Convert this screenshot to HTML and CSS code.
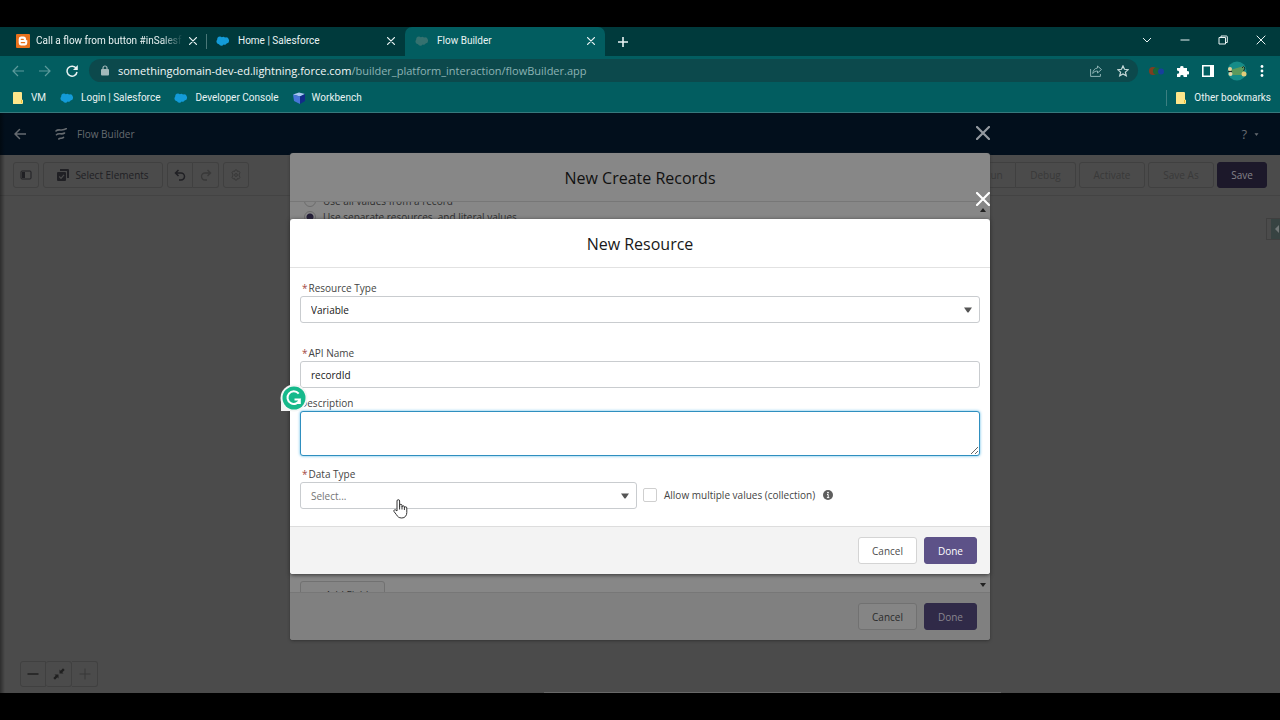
FILE: index.html
```html
<!DOCTYPE html>
<html lang="en">
<head>
<meta charset="utf-8">
<title>Flow Builder</title>
<link rel="stylesheet" href="styles.css">
</head>
<body>
<svg class="defs" aria-hidden="true">
  <symbol id="cloud" viewBox="0 0 14 10"><path d="M5.8 1.2A2.6 2.6 0 0 1 9 1.4a3.2 3.2 0 1 1 1.6 6.2 2.3 2.3 0 0 1-3 .9 2.6 2.6 0 0 1-4.6-.3A2.6 2.6 0 0 1 1.2 3.8 2.8 2.8 0 0 1 5.8 1.2z" fill="currentColor"/></symbol>
  <symbol id="close" viewBox="0 0 14 14"><path d="M1 1l12 12M13 1L1 13" stroke="currentColor" stroke-width="2.2" fill="none" stroke-linecap="round"/></symbol>
  <symbol id="folder" viewBox="0 0 12 12"><path d="M1 1a1 1 0 0 1 1-1h7a1 1 0 0 1 1 1v6.500l1 .5v3a1 1 0 0 1-1 1H1.500a.5.5 0 0 1-.5-.5z" fill="#fde68a"/><path d="M9.500 8v3" stroke="#e8bd3a"/></symbol>
  <symbol id="down" viewBox="0 0 10 6"><path d="M1 .5h8L5.700 5.200a1 1 0 0 1-1.400 0z" fill="currentColor"/></symbol>
</svg>
<div class="window">
  <header class="browser">
    <div class="tabs">
      <div class="tab tab-first">
        <svg class="i14" viewBox="0 0 14 14"><rect width="14" height="14" rx="1" fill="#e8711c"/><path d="M5 2.500h2.500A2.500 2.500 0 0 1 10 5c0 1 .3 1.200 1.300 1.300v2.700A2.500 2.500 0 0 1 9 11.500H5A2.500 2.500 0 0 1 2.700 9V5A2.500 2.500 0 0 1 5 2.500z" fill="#fff"/><path d="M5.300 5.300h2M5.300 8.700h3.300" stroke="#e8711c" stroke-width="1.300" stroke-linecap="round"/></svg>
        <span class="tab-title fade">Call a flow from button #inSalesf</span>
        <button class="plain" aria-label="Close tab"><svg class="i8"><use href="#close"/></svg></button>
      </div>
      <div class="tab tab-mid">
        <svg class="cloud"><use href="#cloud"/></svg>
        <span class="tab-title">Home | Salesforce</span>
        <button class="plain" aria-label="Close tab"><svg class="i8"><use href="#close"/></svg></button>
      </div>
      <div class="tab active">
        <svg class="cloud dim"><use href="#cloud"/></svg>
        <span class="tab-title">Flow Builder</span>
        <button class="plain" aria-label="Close tab"><svg class="i8"><use href="#close"/></svg></button>
      </div>
      <button class="plain newtab" aria-label="New tab"><svg class="i10" viewBox="0 0 10 10"><path d="M5 0v10M0 5h10" stroke="currentColor" stroke-width="1.600"/></svg></button>
      <div class="controls">
        <button class="plain" aria-label="Search tabs"><svg class="i10" viewBox="0 0 10 10"><path d="M1 3l4 4 4-4" stroke="currentColor" fill="none"/></svg></button>
        <button class="plain" aria-label="Minimize"><svg class="i10" viewBox="0 0 10 10"><path d="M.5 5h9" stroke="currentColor"/></svg></button>
        <button class="plain" aria-label="Restore"><svg class="i10" viewBox="0 0 10 10"><path d="M1 2.500h6.500V9H1zM3 2.500V1h5.500a.8.8 0 0 1 .8.8V7.500H7.500" stroke="currentColor" fill="none"/></svg></button>
        <button class="plain" aria-label="Close window"><svg class="i10" viewBox="0 0 10 10"><path d="M.7.7l8.600 8.600M9.300.7L.7 9.300" stroke="currentColor"/></svg></button>
      </div>
    </div>
    <div class="navbar">
      <button class="plain off" aria-label="Back"><svg class="i12" viewBox="0 0 12 12"><path d="M12 6H1.500M6 1L1 6l5 5" stroke="currentColor" fill="none" stroke-width="1.200"/></svg></button>
      <button class="plain off" aria-label="Forward"><svg class="i12" viewBox="0 0 12 12"><path d="M0 6h10.500M6 1l5 5-5 5" stroke="currentColor" fill="none" stroke-width="1.200"/></svg></button>
      <button class="plain" aria-label="Reload"><svg class="i12" viewBox="0 0 12 12"><path d="M10.300 3.500A5 5 0 1 0 11 7" stroke="currentColor" fill="none" stroke-width="1.500"/><path d="M11.800 0v5H7z" fill="currentColor"/></svg></button>
      <div class="url">
        <svg class="lock" viewBox="0 0 8 11"><rect y="4" width="8" height="6.500" rx="1" fill="currentColor"/><path d="M2 4.500V3a2 2 0 0 1 4 0v1.500" stroke="currentColor" fill="none" stroke-width="1.200"/></svg>
        <span class="address"><span class="host">somethingdomain-dev-ed.lightning.force.com</span>/builder_platform_interaction/flowBuilder.app</span>
        <svg class="i12" viewBox="0 0 12 12"><path d="M.6 4v7.400h9.800V9M7.500 1l4 3.500-4 3.500V6C5.500 6 4 6.700 2.800 8.500 3 5.500 4.500 3.300 7.500 3z" stroke="currentColor" fill="none"/></svg>
        <svg class="i12 star" viewBox="0 0 12 12"><path d="M6 .9l1.500 3.400 3.700.4-2.800 2.400.9 3.700L6 8.900l-3.300 1.900.9-3.700L.8 4.700l3.700-.4z" stroke="currentColor" fill="none" stroke-width="1.200"/></svg>
      </div>
      <div class="extensions">
        <svg class="wide" viewBox="0 0 15 10"><circle cx="4" cy="5" r="4" fill="#7d3d20"/><circle cx="7.500" cy="5" r="3.600" fill="#17653a"/><circle cx="12" cy="5.500" r="3" fill="#173f9c"/></svg>
        <svg class="i12" viewBox="0 0 12 12"><path d="M0 3h3.200a1.700 1.700 0 1 1 3.300 0H10v3.200a1.700 1.700 0 1 1 0 3.300V12H6.500a1.600 1.600 0 1 0-3.100 0H0V8.700a1.600 1.600 0 1 0 0-3z" fill="#fff"/></svg>
        <svg class="i12" viewBox="0 0 12 12"><path d="M.8.8h10.400v10.400H.8z" stroke="#fff" stroke-width="1.600" fill="none"/><path d="M8 1h3v10H8z" fill="#fff"/></svg>
        <svg class="avatar" viewBox="0 0 20 20"><circle cx="10" cy="10" r="9.500" fill="#168c88"/><path d="M3 9l14-4v9H6z" fill="#5d9a5c"/><circle cx="3" cy="8" r="2" fill="#e5ce99"/><circle cx="3.500" cy="13" r="2" fill="#e5d5a5"/><circle cx="17" cy="13" r="2.500" fill="#e2cc7a"/><path d="M1 10.500h4M15 7l1.500-1.500L18 7l-1.500 3" stroke="#1d2b2b" fill="none"/></svg>
        <svg class="dots" viewBox="0 0 4 12"><circle cx="2" cy="1.500" r="1.400" fill="#fff"/><circle cx="2" cy="6" r="1.400" fill="#fff"/><circle cx="2" cy="10.500" r="1.400" fill="#fff"/></svg>
      </div>
    </div>
    <nav class="bookmarks">
      <a href="#"><svg class="i12"><use href="#folder"/></svg>VM</a>
      <a href="#"><svg class="cloud"><use href="#cloud"/></svg>Login | Salesforce</a>
      <a href="#"><svg class="cloud"><use href="#cloud"/></svg>Developer Console</a>
      <a href="#"><svg class="i12" viewBox="0 0 12 12"><path d="M0 2.500L6 .5l6 1.500-5 2.500z" fill="#a8c5f2"/><path d="M0 2.500l7 2V12L1 9z" fill="#4775d8"/><path d="M7 4.500L12 2v7l-5 3z" fill="#122b8a"/></svg>Workbench</a>
      <a href="#" class="other"><svg class="i12"><use href="#folder"/></svg>Other bookmarks</a>
    </nav>
  </header>

  <main class="app">
    <div class="app-header">
      <button class="plain" aria-label="Back"><svg class="i12" viewBox="0 0 12 12"><path d="M12 6H1M5.500 1.500L1 6l4.500 4.500" stroke="currentColor" fill="none" stroke-width="1.500" stroke-linecap="round"/></svg></button>
      <svg class="i12 flow" viewBox="0 0 12 12"><path d="M1 3c2.500-2.800 6 .8 10.300-2.300M1.500 6.700c2.500-2.500 4.800.6 8-1.700M3.800 11c1.300-1.800 2.700.2 4.700-1.700" stroke="currentColor" stroke-width="1.600" fill="none" stroke-linecap="round"/></svg>
      <span>Flow Builder</span>
      <button class="plain help" aria-label="Help">?<svg class="caret"><use href="#down"/></svg></button>
    </div>
    <div class="toolbar">
      <button class="tool icon" aria-label="Toggle toolbox"><svg class="i12" viewBox="0 0 12 12"><rect x="1" y="2" width="10" height="8" rx="1" stroke="currentColor" fill="none"/><path d="M2 3h3v6H2z" fill="currentColor"/></svg></button>
      <button class="tool select"><svg class="i12" viewBox="0 0 12 12"><path d="M3 0h8a1 1 0 0 1 1 1v8h-2V2H3z" fill="currentColor"/><rect y="3" width="9" height="9" rx="1" fill="currentColor"/><path d="M2.200 7.500L4 9.300l3-3.500" stroke="#4b4b4b" fill="none" stroke-width="1.200"/></svg>Select Elements</button>
      <div class="group">
        <button class="tool icon" aria-label="Undo"><svg class="i12" viewBox="0 0 12 12"><path d="M4.500 1L1.500 4l3 3M2 4h5a3.500 3.500 0 0 1 0 7H5" stroke="currentColor" fill="none" stroke-width="1.500"/></svg></button>
        <button class="tool icon faint" aria-label="Redo"><svg class="i12" viewBox="0 0 12 12"><path d="M7.500 1l3 3-3 3M10 4H5a3.500 3.500 0 0 0 0 7h2" stroke="currentColor" fill="none" stroke-width="1.300"/></svg></button>
      </div>
      <button class="tool icon faint" aria-label="Settings"><svg class="i12" viewBox="0 0 12 12"><path d="M5 1h2l.4 1.500 1.500-.4 1.200 1.700L9.200 5v2l.9 1.200-1.200 1.700-1.500-.4L7 11H5l-.4-1.500-1.500.4-1.200-1.700.9-1.200V5l-.9-1.200 1.200-1.700 1.500.4z" stroke="currentColor" fill="none"/><circle cx="6" cy="6" r="1.400" stroke="currentColor" fill="none"/></svg></button>
      <div class="actions">
        <div class="group"><button class="tool faint run">Run</button><button class="tool faint debug">Debug</button></div>
        <button class="tool faint activate">Activate</button>
        <button class="tool faint activate">Save As</button>
        <button class="tool save">Save</button>
      </div>
    </div>
    <div class="canvas">
      <button class="panel-tab" aria-label="Open panel"><svg class="i8" viewBox="0 0 8 8"><path d="M6 0L2 4l4 4z" fill="#727878"/></svg></button>
      <div class="group zoomer">
        <button class="tool icon" aria-label="Zoom out"><svg class="i12" viewBox="0 0 12 12"><path d="M.5 6h11" stroke="#1e1e1e" stroke-width="1.400"/></svg></button>
        <button class="tool icon" aria-label="Fit"><svg class="i12" viewBox="0 0 12 12"><path d="M6.500 1.500v4h4L9.300 4.300 11.700 2 10 .3 7.700 2.700zM1.500 6.500h4v4L4.300 9.300 2 11.700.3 10l2.400-2.300z" fill="#202020"/></svg></button>
        <button class="tool icon faint" aria-label="Zoom in"><svg class="i12" viewBox="0 0 12 12"><path d="M.5 6h11M6 .5v11" stroke="currentColor"/></svg></button>
      </div>
      <div class="scroll-line"></div>
    </div>

    <div class="overlay">
      <section class="modal back" aria-label="New Create Records">
        <button class="plain modal-close" aria-label="Close"><svg class="i14"><use href="#close"/></svg></button>
        <h2>New Create Records</h2>
        <div class="records-body">
          <div class="radios">
            <label><input type="radio" name="source">Use all values from a record</label>
            <label><input type="radio" name="source" checked>Use separate resources, and literal values</label>
          </div>
          <button class="btn add-field">+ Add Field</button>
          <svg class="scroll-arrow up" viewBox="0 0 6 4"><path d="M0 4l3-4 3 4z"/></svg>
          <svg class="scroll-arrow dn" viewBox="0 0 6 4"><path d="M0 0l3 4 3-4z"/></svg>
        </div>
        <footer><button class="btn">Cancel</button><button class="btn brand">Done</button></footer>
      </section>
    </div>

    <div class="overlay">
      <section class="modal front" aria-label="New Resource">
        <button class="plain modal-close" aria-label="Close"><svg class="i14"><use href="#close"/></svg></button>
        <h2>New Resource</h2>
        <form class="form">
          <div class="field type">
            <label for="rtype"><span class="req">*</span>Resource Type</label>
            <div class="combo"><select id="rtype"><option>Variable</option></select><svg class="arrow"><use href="#down"/></svg></div>
          </div>
          <div class="field name">
            <label for="api"><span class="req">*</span>API Name</label>
            <input id="api" type="text" value="recordId">
          </div>
          <div class="field desc">
            <label for="description">Description</label>
            <textarea id="description"></textarea>
            <svg class="badge" viewBox="0 0 28 28"><path d="M1 14v13h13z" fill="#f4f4f4"/><circle cx="14" cy="14" r="13.500" fill="#f4f6f5"/><circle cx="14" cy="14" r="11.500" fill="#16b98b"/><path d="M18.700 9.700A6.300 6.300 0 1 0 19.800 15.500H14.500M19.800 15.500V20" stroke="#fff" stroke-width="2" fill="none"/></svg>
          </div>
          <div class="row">
            <div class="field data">
              <label for="dtype"><span class="req">*</span>Data Type</label>
              <div class="combo"><select id="dtype" class="placeholder"><option>Select...</option></select><svg class="arrow"><use href="#down"/></svg></div>
            </div>
            <label class="check"><input type="checkbox">Allow multiple values (collection)</label>
            <svg class="info" viewBox="0 0 10 10"><circle cx="5" cy="5" r="5" fill="#5e5e5e"/><circle cx="5" cy="2.600" r=".9" fill="#fff"/><path d="M4 4.500h1.200v3M3.900 7.600h2.400" stroke="#fff" fill="none"/></svg>
          </div>
        </form>
        <footer><button class="btn">Cancel</button><button class="btn brand">Done</button></footer>
        <svg class="pointer" viewBox="0 0 15 20"><path d="M4 12V2a1.300 1.300 0 0 1 2.600 0v6V6.500a1.200 1.200 0 0 1 2.400 0V8a1.200 1.200 0 0 1 2.400 0v1a1.200 1.200 0 0 1 2.400 0v4.500c0 3-1.800 5.500-5 5.500-3 0-4.300-1.500-5.500-3.500L1 12.500c-.7-1.200.8-2.300 1.800-1.500z" fill="#fff" stroke="#333"/><path d="M6.600 8v2.500M9 8v2.500M11.400 9v2" stroke="#333"/></svg>
      </section>
    </div>
  </main>
</div>
</body>
</html>
```
FILE: styles.css
```css
* { box-sizing: border-box; }
body {
  margin: 0;
  background: #000;
  font-family: "Open Sans", "Noto Sans", sans-serif;
  font-size: 10px;
  line-height: 16px;
}
button, input, select, textarea { font: inherit; color: inherit; }
svg { display: block; flex: none; }
.defs { position: absolute; width: 0; height: 0; }
.i8 { width: 8px; height: 8px; }
.i10 { width: 10px; height: 10px; }
.i12 { width: 12px; height: 12px; }
.i14 { width: 14px; height: 14px; }
.cloud { width: 14px; height: 10px; color: #139bd8; }
.cloud.dim { color: #35716f; }
.plain { display: flex; align-items: center; padding: 0; border: 0; background: none; }

.window { display: flex; flex-direction: column; height: 100vh; padding: 27px 0; }

/* Browser chrome */
.browser { background: #025d60; color: #e9f3f3; border-bottom: 1px solid #37797d; }
.tabs { display: flex; background: #003a3c; height: 29px; }
.tab { display: flex; align-items: center; gap: 8px; padding: 0 10px 2px; }
.tab-first { width: 206px; padding: 0 9px 2px 16px; gap: 6px; }
.tab-mid { width: 199px; position: relative; }
.tab-mid::before { content: ""; position: absolute; left: 0; top: 7px; height: 15px; border-left: 1px solid #4a7778; }
.tab.active { width: 200px; background: #025d60; border-radius: 7px 7px 0 0; }
.tab-title { flex: 1; overflow: hidden; white-space: nowrap; }
.tab-title, .bookmarks { font-family: Roboto, "Noto Sans", sans-serif; }
.fade { mask-image: linear-gradient(90deg, #000 85%, transparent); }
.newtab { margin-left: 13px; }
.controls { display: flex; gap: 28px; margin-left: auto; padding: 0 14px 4px 0; }
.navbar { display: flex; align-items: center; gap: 15px; height: 29px; padding: 0 16px 0 12px; }
.off { color: #5c9a9b; }
.url {
  flex: 1; display: flex; align-items: center; height: 23px; margin: 0 -4px 0 -4px;
  padding: 0 9px 0 12px; border-radius: 12px; background: #0c494c; color: #8db3b4;
}
.lock { width: 8px; height: 11px; margin-right: 9px; color: #a4b9ba; }
.address { flex: 1; font-size: 11px; white-space: nowrap; overflow: hidden; }
.host { color: #f2f8f8; }
.star { margin-left: 15px; color: #c7dada; }
.extensions { display: flex; align-items: center; gap: 13px; }
.wide { width: 15px; height: 10px; }
.avatar { width: 20px; height: 20px; }
.dots { width: 4px; height: 12px; }
.bookmarks { display: flex; align-items: center; gap: 14px; height: 27px; padding: 0 9px 2px 12px; }
.bookmarks a { display: flex; align-items: center; gap: 7px; color: inherit; text-decoration: none; white-space: nowrap; }
.bookmarks .other { margin-left: auto; padding-left: 8px; border-left: 1px solid #3c7f81; }

/* Flow Builder */
.app { flex: 1; min-height: 0; position: relative; display: flex; flex-direction: column; background: #4b4b4b; overflow: hidden; }
.app::before { content: ""; position: absolute; z-index: 1; top: 0; bottom: 0; left: 0; width: 5px; background: linear-gradient(90deg, rgba(0, 0, 0, .4), transparent); }
.app-header { display: flex; align-items: center; height: 42px; padding: 0 21px 0 14px; background: #020f1c; color: #666b70; }
.flow { margin: 0 10px 0 29px; }
.help { margin-left: auto; gap: 7px; font-size: 13px; }
.caret { width: 5px; height: 3px; }
.toolbar { display: flex; align-items: center; gap: 4px; height: 41px; padding: 0 13px; border-bottom: 1px solid #434343; }
.tool {
  display: flex; align-items: center; justify-content: center; height: 26px; padding: 0;
  border: 1px solid #404040; border-radius: 3px; background: #4b4b4b; color: #202024; white-space: nowrap;
}
.icon { width: 26px; }
.select { width: 120px; gap: 6px; }
.faint { color: #393939; }
.group { display: flex; }
.group .tool:first-child { border-radius: 3px 0 0 3px; }
.group .tool:last-child { border-radius: 0 3px 3px 0; }
.group .tool + .tool { border-left: 0; }
.actions { display: flex; gap: 3px; margin-left: auto; }
.run { width: 45px; }
.debug { width: 60px; }
.activate { width: 66px; }
.save { width: 50px; background: #1c182a; border-color: #1c182a; color: #858389; }
.canvas { flex: 1; position: relative; }
.panel-tab {
  position: absolute; right: 0; top: 22px; width: 14px; height: 22px; padding: 0 0 0 6px;
  border: 1px solid #3f3f3f; border-right: 0; background: linear-gradient(90deg, #4b4b4b 4px, #374342 4px);
}
.zoomer { position: absolute; left: 20px; bottom: 6px; }
.scroll-line { position: absolute; left: 42.5%; right: 21.800%; bottom: 0; height: 1px; background: #686868; }

/* Modals */
.overlay { position: absolute; inset: 0; display: flex; align-items: center; justify-content: center; padding-bottom: 13px; }
.modal { position: relative; display: flex; flex-direction: column; width: 700px; max-width: 95%; border-radius: 3px; }
.modal h2 { margin: 0; padding: 13px 0 11px; font-size: 16px; line-height: 24px; font-weight: 400; text-align: center; border-bottom: 1px solid #ddd; }
.modal-close { position: absolute; top: -27px; right: 0; color: #fff; }
.modal footer { display: flex; justify-content: flex-end; gap: 7px; padding: 10px 13px; border-top: 1px solid #ddd; border-radius: 0 0 3px 3px; background: #f3f3f3; }
.btn { height: 27px; padding: 0 13px; border: 1px solid #d4d4d4; border-radius: 3px; background: #fff; color: #4c4c4c; }
.brand { background: #5d5288; border-color: #5d5288; color: #fff; }

.back { height: 86%; background: #878787; color: #111; box-shadow: 0 1px 3px #333; }
.back h2 { border-color: #777; }
.back .modal-close { color: #949aa0; }
.back footer { background: #808080; border-color: #777; }
.back .btn { background: #858585; border-color: #717171; color: #2b2b2b; }
.back .brand { background: #302a48; border-color: #302a48; color: #88858e; }
.records-body { position: relative; flex: 1; min-height: 0; overflow: hidden; display: flex; flex-direction: column; justify-content: space-between; align-items: flex-start; padding: 0 10px; }
.radios { margin-top: -9px; color: #2d2d2d; }
.radios label { display: flex; align-items: center; gap: 7px; padding-left: 4px; }
.radios input { appearance: none; width: 12px; height: 12px; margin: 0; border: 1px solid #6c6c6c; border-radius: 50%; background: #878787; }
.radios input:checked { background: radial-gradient(circle, #241f38 3px, #878787 4px); }
.back .add-field { margin-bottom: -16px; padding: 0 16px; }
.scroll-arrow { position: absolute; right: 4px; width: 6px; height: 4px; fill: #222; }
.up { top: 6px; }
.dn { bottom: 5px; }

.front { background: #fff; color: #181818; box-shadow: 0 1px 4px #333; }
.front h2 { border-color: #e2e2e2; }
.form { padding: 12px 10px 17px; }
.field { position: relative; display: flex; flex-direction: column; }
.field > label { color: #444; }
.type { margin-bottom: 22px; }
.name { margin-bottom: 7px; }
.desc { margin-bottom: 10px; }
.req { margin: 0 1px 0 2px; color: #a34a45; }
.field input, .field select, .field textarea { width: 100%; height: 27px; margin: 0; padding: 0 10px; border: 1px solid #c9cccf; border-radius: 3px; background: #fff; outline: none; }
.field textarea { display: block; height: 45px; border: 1px solid #2f8fbf; box-shadow: 0 0 3px #58b8e6; resize: vertical; }
.field select { appearance: none; }
.field .placeholder { color: #757575; }
.combo { position: relative; }
.arrow { position: absolute; right: 7px; top: 11px; width: 10px; height: 6px; color: #555; }
.row { display: flex; align-items: center; }
.data { width: 337px; }
.check { display: flex; align-items: center; gap: 7px; margin: 14px 8px 0 6px; color: #444; white-space: nowrap; }
.check input { appearance: none; width: 14px; height: 14px; margin: 0; border: 1px solid #cfcfcf; border-radius: 2px; }
.info { width: 10px; height: 10px; margin-top: 14px; }
.badge { position: absolute; left: -20px; top: -11px; width: 28px; height: 28px; }
.pointer { position: absolute; left: 103px; top: 280px; width: 15px; height: 20px; }
```
